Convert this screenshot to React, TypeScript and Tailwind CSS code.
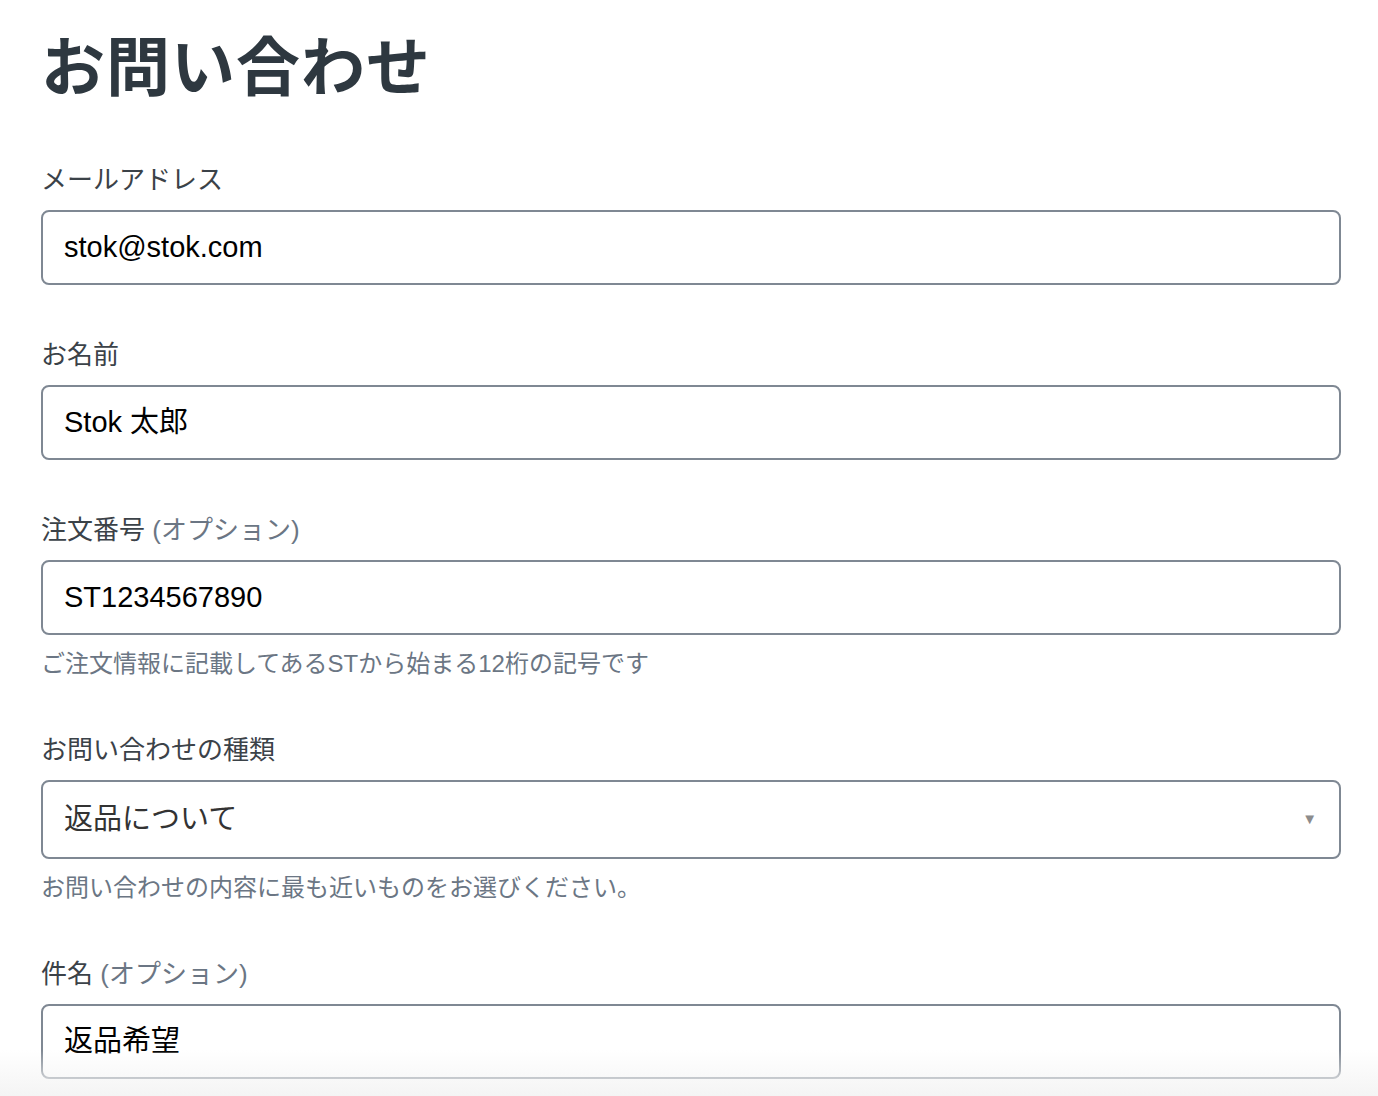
import React from 'react';

const font = { fontFamily: '"Liberation Sans", "Noto Sans CJK JP", sans-serif' };

function Label({ text, optional }: { text: string; optional?: boolean }) {
  return (
    <div className="text-[26px] leading-[36px] text-[#3b4248] mb-[12px]">
      {text}
      {optional && <span className="text-[#6b7684]"> (オプション)</span>}
    </div>
  );
}

function Field({ value }: { value: string }) {
  return (
    <div className="h-[75px] border-2 border-[#7f8893] rounded-[8px] flex items-center px-[21px] text-[29px] text-black bg-white">
      {value}
    </div>
  );
}

function Help({ text }: { text: string }) {
  return <div className="mt-[13px] text-[24px] leading-[32px] text-[#6b7684]">{text}</div>;
}

export default function App() {
  return (
    <div className="relative min-h-[1096px] bg-white pl-[41px] pr-[37px] pt-[26px]" style={font}>
      <h1 className="text-[64px] leading-[84px] font-bold text-[#2e3840] tracking-[1px]">お問い合わせ</h1>

      <div className="mt-[52px] space-y-[52px]">
        <div>
          <Label text="メールアドレス" />
          <Field value="stok@stok.com" />
        </div>

        <div>
          <Label text="お名前" />
          <Field value="Stok 太郎" />
        </div>

        <div>
          <Label text="注文番号" optional />
          <Field value="ST1234567890" />
          <Help text="ご注文情報に記載してあるSTから始まる12桁の記号です" />
        </div>

        <div>
          <Label text="お問い合わせの種類" />
          <div className="h-[79px] border-2 border-[#7f8893] rounded-[8px] flex items-center justify-between pl-[21px] pr-[22px] text-[29px] text-[#333] bg-white">
            <span>返品について</span>
            <span className="text-[15px] text-[#8c8c8c]">▼</span>
          </div>
          <Help text="お問い合わせの内容に最も近いものをお選びください。" />
        </div>

        <div>
          <Label text="件名" optional />
          <Field value="返品希望" />
        </div>
      </div>

      {/* bottom fade */}
      <div className="pointer-events-none absolute left-0 right-0 top-[1050px] h-[46px] bg-gradient-to-b from-transparent to-[#f4f4f4]" />
    </div>
  );
}
